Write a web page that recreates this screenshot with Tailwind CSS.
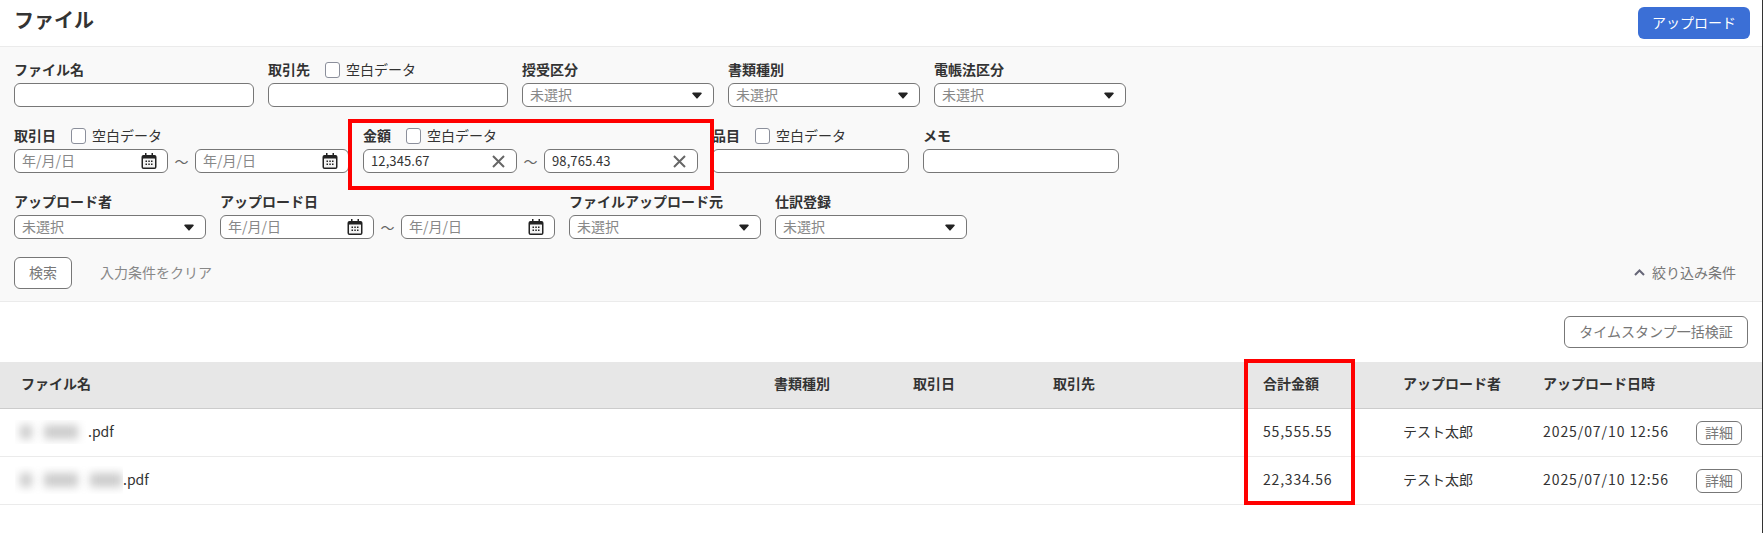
<!DOCTYPE html>
<html lang="ja">
  <head>
    <meta charset="UTF-8" />
    <title>ファイル</title>
    <script src="https://cdn.jsdelivr.net/npm/@tailwindcss/browser@4"></script>
  </head>
  <body class="bg-white text-[#333] text-[14px] font-['Noto_Sans_CJK_JP','Noto_Sans',sans-serif]">
    <!-- icons -->
    <svg class="hidden">
      <symbol id="cal" viewBox="0 0 16 16">
        <path d="M4 0h1.500v2H10.500V0H12v2h1.500A2 2 0 0 1 15.500 4v10a2 2 0 0 1-2 2h-11a2 2 0 0 1-2-2V4a2 2 0 0 1 2-2H4z" fill="#222" />
        <rect x="2" y="5.500" width="12" height="9" rx="0.500" fill="#f4f4f4" />
        <path d="M4.500 7.500h1.500V9H4.500zM7.300 7.500h1.500V9H7.300zM10 7.500h1.500V9H10zM4.500 10.500h1.500V12H4.500zM7.300 10.500h1.500V12H7.300zM10 10.500h1.500V12H10z" fill="#222" />
      </symbol>
      <symbol id="arrow" viewBox="0 0 10 7">
        <path d="M1 0.500h8a0.800 0.800 0 0 1 0.600 1.300L5.600 6.300a0.800 0.800 0 0 1-1.200 0L0.400 1.800A0.800 0.800 0 0 1 1 0.500z" fill="#222" />
      </symbol>
      <symbol id="clear" viewBox="0 0 13 13">
        <path d="M1 1l11 11M12 1L1 12" stroke="#666" stroke-width="2" fill="none" />
      </symbol>
    </svg>

    <div class="relative h-[533px] overflow-hidden border-r border-[#333]">
      <!-- Header -->
      <header class="h-[47px] flex justify-between items-center pl-[14px] pr-[12px] border-b border-[#ebebeb]">
        <h1 class="text-[20px] font-bold pb-[6px]">ファイル</h1>
        <button class="w-[112px] h-[32px] pb-[2px] rounded-[6px] bg-[#3b6fd6] text-white">アップロード</button>
      </header>

      <!-- Filters -->
      <section class="bg-[#f9f9f9] h-[255px] border-b border-[#ebebeb] pt-[13px] px-[14px] flex flex-col gap-[19px]">
        <div class="flex gap-[14px]">
          <div class="w-[240px]">
            <div class="h-[20px] pb-[2px] mb-[3px] flex items-center font-bold">ファイル名</div>
            <input class="w-full h-[24px] px-[7px] bg-white border border-[#777] rounded-[6px]" />
          </div>
          <div class="w-[240px]">
            <div class="h-[20px] pb-[2px] mb-[3px] flex items-center">
              <span class="font-bold mr-[15px]">取引先</span>
              <span class="w-[15px] h-[16px] mt-[2px] bg-white border border-[#8b8f9b] rounded-[3px] mr-[6px]"></span>空白データ
            </div>
            <input class="w-full h-[24px] px-[7px] bg-white border border-[#777] rounded-[6px]" />
          </div>
          <div class="w-[192px]">
            <div class="h-[20px] pb-[2px] mb-[3px] flex items-center font-bold">授受区分</div>
            <div class="h-[24px] pl-[7px] pr-[11px] bg-white border border-[#777] rounded-[6px] flex justify-between items-center text-[#888]"><span class="pb-[2px]">未選択</span><svg class="w-[10px] h-[7px]"><use href="#arrow" /></svg></div>
          </div>
          <div class="w-[192px]">
            <div class="h-[20px] pb-[2px] mb-[3px] flex items-center font-bold">書類種別</div>
            <div class="h-[24px] pl-[7px] pr-[11px] bg-white border border-[#777] rounded-[6px] flex justify-between items-center text-[#888]"><span class="pb-[2px]">未選択</span><svg class="w-[10px] h-[7px]"><use href="#arrow" /></svg></div>
          </div>
          <div class="w-[192px]">
            <div class="h-[20px] pb-[2px] mb-[3px] flex items-center font-bold">電帳法区分</div>
            <div class="h-[24px] pl-[7px] pr-[11px] bg-white border border-[#777] rounded-[6px] flex justify-between items-center text-[#888]"><span class="pb-[2px]">未選択</span><svg class="w-[10px] h-[7px]"><use href="#arrow" /></svg></div>
          </div>
        </div>

        <div class="flex gap-[14px]">
          <div class="w-[335px]">
            <div class="h-[20px] pb-[2px] mb-[3px] flex items-center">
              <span class="font-bold mr-[15px]">取引日</span>
              <span class="w-[15px] h-[16px] mt-[2px] bg-white border border-[#8b8f9b] rounded-[3px] mr-[6px]"></span>空白データ
            </div>
            <div class="flex items-center">
              <div class="w-[154px] h-[24px] pl-[7px] pr-[10px] bg-white border border-[#777] rounded-[6px] flex justify-between items-center text-[#888]"><span class="pb-[2px]">年/月/日</span><svg class="w-[16px] h-[16px]"><use href="#cal" /></svg></div>
              <span class="w-[27px] text-center text-[#666]">～</span>
              <div class="w-[154px] h-[24px] pl-[7px] pr-[10px] bg-white border border-[#777] rounded-[6px] flex justify-between items-center text-[#888]"><span class="pb-[2px]">年/月/日</span><svg class="w-[16px] h-[16px]"><use href="#cal" /></svg></div>
            </div>
          </div>
          <div class="w-[335px]">
            <div class="h-[20px] pb-[2px] mb-[3px] flex items-center">
              <span class="font-bold mr-[15px]">金額</span>
              <span class="w-[15px] h-[16px] mt-[2px] bg-white border border-[#8b8f9b] rounded-[3px] mr-[6px]"></span>空白データ
            </div>
            <div class="flex items-center">
              <div class="w-[154px] h-[24px] pl-[7px] pr-[11px] bg-white border border-[#777] rounded-[6px] flex justify-between items-center text-[13px]"><span class="tracking-[0.1px]">12,345.67</span><svg class="w-[13px] h-[13px]"><use href="#clear" /></svg></div>
              <span class="w-[27px] text-center text-[#666]">～</span>
              <div class="w-[154px] h-[24px] pl-[7px] pr-[11px] bg-white border border-[#777] rounded-[6px] flex justify-between items-center text-[13px]"><span class="tracking-[0.1px]">98,765.43</span><svg class="w-[13px] h-[13px]"><use href="#clear" /></svg></div>
            </div>
          </div>
          <div class="w-[197px]">
            <div class="h-[20px] pb-[2px] mb-[3px] flex items-center">
              <span class="font-bold mr-[15px]">品目</span>
              <span class="w-[15px] h-[16px] mt-[2px] bg-white border border-[#8b8f9b] rounded-[3px] mr-[6px]"></span>空白データ
            </div>
            <input class="w-full h-[24px] px-[7px] bg-white border border-[#777] rounded-[6px]" />
          </div>
          <div class="w-[196px]">
            <div class="h-[20px] pb-[2px] mb-[3px] flex items-center font-bold">メモ</div>
            <input class="w-full h-[24px] px-[7px] bg-white border border-[#777] rounded-[6px]" />
          </div>
        </div>

        <div class="flex gap-[14px]">
          <div class="w-[192px]">
            <div class="h-[20px] pb-[2px] mb-[3px] flex items-center font-bold">アップロード者</div>
            <div class="h-[24px] pl-[7px] pr-[11px] bg-white border border-[#777] rounded-[6px] flex justify-between items-center text-[#888]"><span class="pb-[2px]">未選択</span><svg class="w-[10px] h-[7px]"><use href="#arrow" /></svg></div>
          </div>
          <div class="w-[335px]">
            <div class="h-[20px] pb-[2px] mb-[3px] flex items-center font-bold">アップロード日</div>
            <div class="flex items-center">
              <div class="w-[154px] h-[24px] pl-[7px] pr-[10px] bg-white border border-[#777] rounded-[6px] flex justify-between items-center text-[#888]"><span class="pb-[2px]">年/月/日</span><svg class="w-[16px] h-[16px]"><use href="#cal" /></svg></div>
              <span class="w-[27px] text-center text-[#666]">～</span>
              <div class="w-[154px] h-[24px] pl-[7px] pr-[10px] bg-white border border-[#777] rounded-[6px] flex justify-between items-center text-[#888]"><span class="pb-[2px]">年/月/日</span><svg class="w-[16px] h-[16px]"><use href="#cal" /></svg></div>
            </div>
          </div>
          <div class="w-[192px]">
            <div class="h-[20px] pb-[2px] mb-[3px] flex items-center font-bold">ファイルアップロード元</div>
            <div class="h-[24px] pl-[7px] pr-[11px] bg-white border border-[#777] rounded-[6px] flex justify-between items-center text-[#888]"><span class="pb-[2px]">未選択</span><svg class="w-[10px] h-[7px]"><use href="#arrow" /></svg></div>
          </div>
          <div class="w-[192px]">
            <div class="h-[20px] pb-[2px] mb-[3px] flex items-center font-bold">仕訳登録</div>
            <div class="h-[24px] pl-[7px] pr-[11px] bg-white border border-[#777] rounded-[6px] flex justify-between items-center text-[#888]"><span class="pb-[2px]">未選択</span><svg class="w-[10px] h-[7px]"><use href="#arrow" /></svg></div>
          </div>
        </div>

        <div class="flex items-center -mt-[1px] pr-[12px]">
          <button class="w-[58px] h-[32px] pb-[2px] bg-white border border-[#777] rounded-[6px] text-[#777]">検索</button>
          <span class="ml-[28px] pb-[2px] text-[#888]">入力条件をクリア</span>
          <span class="ml-auto pb-[2px] flex items-center gap-[7px] text-[#777]">
            <svg class="w-[11px] h-[7px]" viewBox="0 0 11 7"><path d="M1 6l4.500-4.500L10 6" stroke="#667" stroke-width="2" fill="none" /></svg>絞り込み条件
          </span>
        </div>
      </section>

      <!-- Toolbar -->
      <div class="h-[60px] flex justify-end items-center pr-[14px]">
        <button class="w-[184px] h-[32px] pb-[2px] bg-white border border-[#777] rounded-[6px] text-[#777]">タイムスタンプ一括検証</button>
      </div>

      <!-- Table -->
      <div class="h-[47px] pb-[3px] grid grid-cols-[774px_139px_140px_210px_140px_140px_1fr] items-center bg-[#e7e7e7] border-b border-[#ccc] font-bold">
        <div class="pl-[21px]">ファイル名</div>
        <div>書類種別</div>
        <div>取引日</div>
        <div>取引先</div>
        <div>合計金額</div>
        <div>アップロード者</div>
        <div>アップロード日時</div>
      </div>
      <div class="h-[48px] pb-[2px] grid grid-cols-[774px_139px_140px_210px_140px_140px_1fr] items-center border-b border-[#ebebeb]">
        <div class="pl-[15px] flex items-center">
          <div class="w-[72px] h-[24px] flex items-center gap-[12px] pl-[5px] overflow-hidden">
            <span class="w-[12px] h-[14px] shrink-0 bg-[#ccc] blur-[4px]"></span>
            <span class="w-[34px] h-[14px] shrink-0 bg-[#ccc] blur-[4px]"></span>
          </div>
          <span class="ml-[1px]">.pdf</span>
        </div>
        <div></div>
        <div></div>
        <div></div>
        <div class="tracking-[0.8px]">55,555.55</div>
        <div>テスト太郎</div>
        <div class="flex items-center tracking-[0.92px] whitespace-nowrap">2025/07/10 12:56
          <button class="ml-[27px] w-[46px] h-[24px] mt-[2px] pb-[1px] shrink-0 tracking-normal bg-white border border-[#777] rounded-[6px] text-[#777]">詳細</button>
        </div>
      </div>
      <div class="h-[48px] pb-[2px] grid grid-cols-[774px_139px_140px_210px_140px_140px_1fr] items-center border-b border-[#ebebeb]">
        <div class="pl-[15px] flex items-center">
          <div class="w-[108px] h-[28px] flex items-center gap-[12px] pl-[5px] overflow-hidden">
            <span class="w-[12px] h-[14px] shrink-0 bg-[#ccc] blur-[4px]"></span>
            <span class="w-[34px] h-[14px] shrink-0 bg-[#ccc] blur-[4px]"></span>
            <span class="w-[32px] h-[14px] shrink-0 bg-[#ccc] blur-[4px]"></span>
          </div>
          <span>.pdf</span>
        </div>
        <div></div>
        <div></div>
        <div></div>
        <div class="tracking-[0.8px]">22,334.56</div>
        <div>テスト太郎</div>
        <div class="flex items-center tracking-[0.92px] whitespace-nowrap">2025/07/10 12:56
          <button class="ml-[27px] w-[46px] h-[24px] mt-[2px] pb-[1px] shrink-0 tracking-normal bg-white border border-[#777] rounded-[6px] text-[#777]">詳細</button>
        </div>
      </div>

      <!-- red annotation boxes -->
      <div class="absolute left-[348px] top-[119px] w-[366px] h-[71px] border-4 border-[#f00]"></div>
      <div class="absolute left-[1244px] top-[359px] w-[111px] h-[146px] border-4 border-[#f00]"></div>
    </div>
  </body>
</html>
